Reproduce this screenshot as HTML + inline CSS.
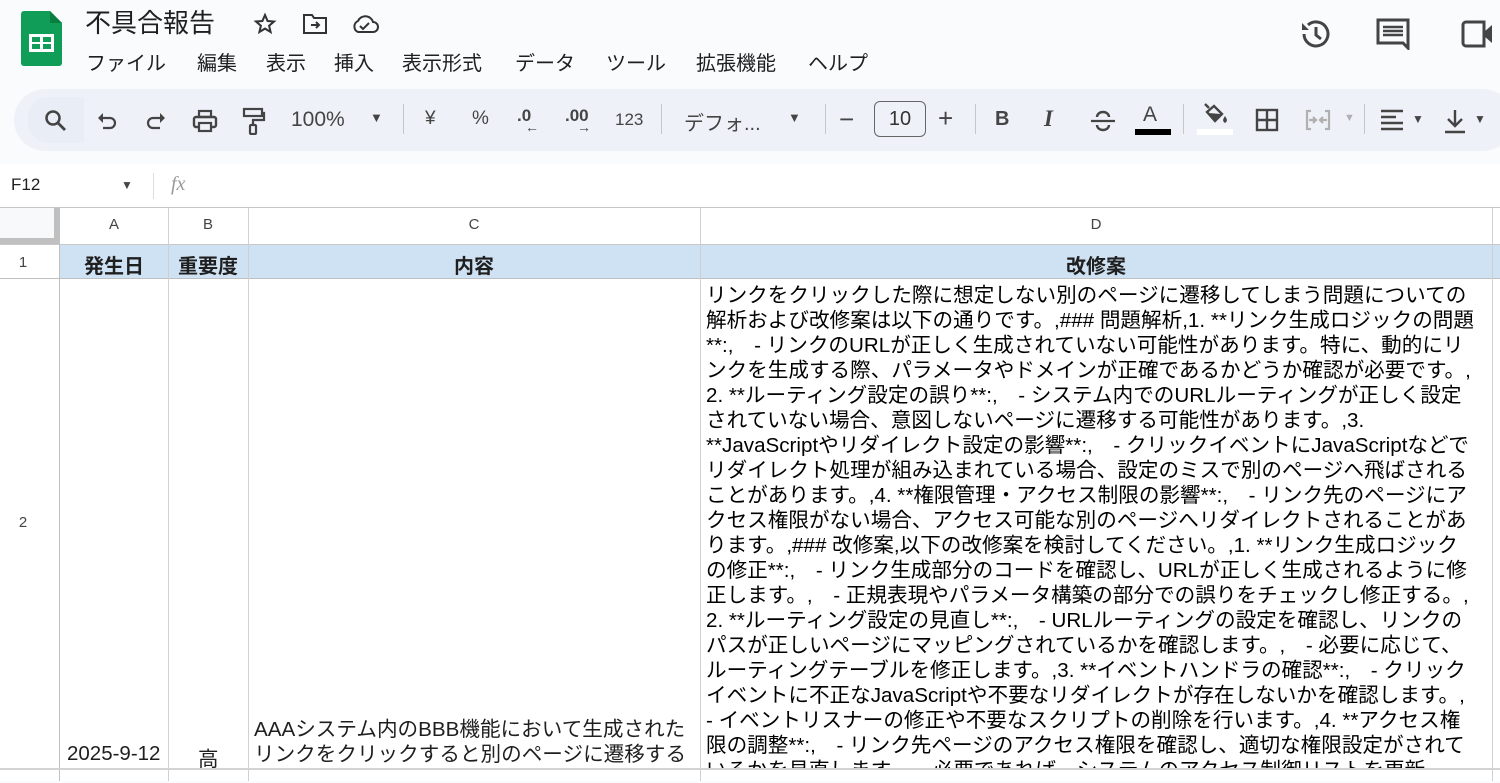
<!DOCTYPE html>
<html><head><meta charset="utf-8"><style>
*{margin:0;padding:0;box-sizing:border-box}
body{width:1500px;height:781px;overflow:hidden;background:#f9fbfd;font-family:"Liberation Sans","Noto Sans CJK JP",sans-serif;color:#1f1f1f;position:relative}
.abs{position:absolute}
.title{left:85px;top:3px;font-size:26px}
.menu{top:47px;font-size:20px;white-space:nowrap}
.tb{left:14px;top:89px;width:1500px;height:62px;border-radius:31px;background:#eef2f8}
.ic{position:absolute;color:#444;font-size:19px}
.sep{position:absolute;top:104px;width:1px;height:30px;background:#c7c7c7}
.fbar{left:0;top:164px;width:1500px;height:44px;background:#fff;border-bottom:1px solid #c7c7c7}
.grid{left:0;top:208px;width:1500px;height:573px;background:#fff}
.vl{position:absolute;width:1px;background:#e1e1e1}
.hl{position:absolute;height:1px;background:#e1e1e1}
.ch{position:absolute;top:216px;font-size:15px;color:#444;text-align:center}
.d{position:absolute;left:706px;top:283px;font-size:20.6px;line-height:25px;white-space:nowrap;color:#000}
</style></head><body>
<svg class="abs" style="left:21px;top:11px" width="41" height="55" viewBox="0 0 41 55"><path d="M3 0h26l12 12v40a3 3 0 0 1-3 3H3a3 3 0 0 1-3-3V3a3 3 0 0 1 3-3z" fill="#0f9d58"/><path d="M29 0l12 12H29z" fill="#087f3e"/><rect x="8" y="23" width="25" height="18" fill="#fff"/><rect x="11" y="26" width="8" height="5" fill="#0f9d58"/><rect x="22" y="26" width="8" height="5" fill="#0f9d58"/><rect x="11" y="33" width="8" height="5" fill="#0f9d58"/><rect x="22" y="33" width="8" height="5" fill="#0f9d58"/></svg>
<div class="abs title">不具合報告</div>
<svg class="abs" style="left:252px;top:12px" width="26" height="24" viewBox="0 0 24 24"><path d="M12 3l2.6 6 6.4.5-4.9 4.2 1.5 6.3L12 16.6 6.4 20l1.5-6.3L3 9.5 9.4 9z" fill="none" stroke="#333" stroke-width="2"/></svg>
<svg class="abs" style="left:302px;top:13px" width="26" height="22" viewBox="0 0 26 22"><path d="M2 2h8l2 3h12v15H2z" fill="none" stroke="#333" stroke-width="2"/><path d="M9 12h8m-3-3l3 3-3 3" fill="none" stroke="#333" stroke-width="2"/></svg>
<svg class="abs" style="left:350px;top:13px" width="30" height="22" viewBox="0 0 30 22"><path d="M8 19h15a5 5 0 0 0 0-10 8 8 0 0 0-15-1 6 6 0 0 0 0 11z" fill="none" stroke="#333" stroke-width="2"/><path d="M10 13l3 3 6-6" fill="none" stroke="#333" stroke-width="2"/></svg>
<div class="abs menu" style="left:86px">ファイル</div>
<div class="abs menu" style="left:197px">編集</div>
<div class="abs menu" style="left:266px">表示</div>
<div class="abs menu" style="left:334px">挿入</div>
<div class="abs menu" style="left:402px">表示形式</div>
<div class="abs menu" style="left:515px">データ</div>
<div class="abs menu" style="left:606px">ツール</div>
<div class="abs menu" style="left:696px">拡張機能</div>
<div class="abs menu" style="left:808px">ヘルプ</div>
<svg class="abs" style="left:1299px;top:17px" width="34" height="34" viewBox="0 0 34 34"><path d="M5 17A12 12 0 1 0 9 8" fill="none" stroke="#444" stroke-width="3"/><path d="M3 6v7h7z" fill="#444"/><path d="M17 10v8l5 4" fill="none" stroke="#444" stroke-width="3"/></svg>
<svg class="abs" style="left:1376px;top:18px" width="34" height="32" viewBox="0 0 34 32"><path d="M2 2h30v28l-5-5H2z" fill="none" stroke="#444" stroke-width="3"/><path d="M7 9h20M7 13h20M7 17h20" stroke="#444" stroke-width="2.5"/></svg>
<svg class="abs" style="left:1460px;top:20px" width="40" height="28" viewBox="0 0 40 28"><path d="M3 5a3 3 0 0 1 3-3h18v24H6a3 3 0 0 1-3-3z" fill="none" stroke="#444" stroke-width="3"/><path d="M24 12l8-7v18l-8-7z" fill="#444"/></svg>

<div class="abs tb"></div>
<div class="abs" style="left:28px;top:97px;width:56px;height:46px;border-radius:20px 0 0 20px;background:#e9eef6"></div>
<svg class="abs" style="left:44px;top:109px" width="24" height="24" viewBox="0 0 24 24"><circle cx="9" cy="9" r="6.5" fill="none" stroke="#444" stroke-width="2.5"/><path d="M14 14l7 7" stroke="#444" stroke-width="2.8"/></svg>
<svg class="abs" style="left:96px;top:110px" width="22" height="22" viewBox="0 0 22 22"><path d="M6 8h8a5 5 0 0 1 0 10H7" fill="none" stroke="#444" stroke-width="2.2"/><path d="M2 8l5-5v10z" fill="#444"/></svg>
<svg class="abs" style="left:145px;top:110px" width="22" height="22" viewBox="0 0 22 22"><path d="M16 8H8a5 5 0 0 0 0 10h7" fill="none" stroke="#444" stroke-width="2.2"/><path d="M20 8l-5-5v10z" fill="#444"/></svg>
<svg class="abs" style="left:192px;top:108px" width="26" height="26" viewBox="0 0 26 26"><rect x="7" y="3" width="12" height="6" fill="none" stroke="#444" stroke-width="2.2"/><rect x="2" y="9" width="22" height="10" rx="2" fill="none" stroke="#444" stroke-width="2.4"/><rect x="7" y="15" width="12" height="8" fill="#eef2f8" stroke="#444" stroke-width="2.2"/></svg>
<svg class="abs" style="left:242px;top:107px" width="24" height="28" viewBox="0 0 24 28"><rect x="2" y="2" width="18" height="7" fill="none" stroke="#444" stroke-width="2.2"/><path d="M20 6h2v7H11v5" fill="none" stroke="#444" stroke-width="2.2"/><rect x="8" y="18" width="6" height="9" rx="1" fill="none" stroke="#444" stroke-width="2.2"/></svg>
<div class="ic" style="left:291px;top:108px;font-size:21px">100%</div>
<div class="ic" style="left:370px;top:110px;font-size:13px">▼</div>
<div class="sep" style="left:403px"></div>
<div class="ic" style="left:425px;top:108px">¥</div>
<div class="ic" style="left:472px;top:108px">%</div>
<div class="ic" style="left:517px;top:106px;font-size:17px;font-weight:bold">.0<span style="position:absolute;left:8px;top:13px;font-size:14px">←</span></div>
<div class="ic" style="left:565px;top:106px;font-size:17px;font-weight:bold">.00<span style="position:absolute;left:12px;top:13px;font-size:14px">→</span></div>
<div class="ic" style="left:615px;top:110px;font-size:17px">123</div>
<div class="sep" style="left:661px"></div>
<div class="ic" style="left:684px;top:107px;font-size:20px">デフォ...</div>
<div class="ic" style="left:788px;top:110px;font-size:13px">▼</div>
<div class="sep" style="left:825px"></div>
<div class="ic" style="left:839px;top:104px;font-size:26px">−</div>
<div class="abs" style="left:874px;top:101px;width:52px;height:36px;border:1px solid #666;border-radius:6px;font-size:20px;text-align:center;line-height:34px;color:#333">10</div>
<div class="ic" style="left:938px;top:103px;font-size:26px">+</div>
<div class="sep" style="left:975px"></div>
<div class="ic" style="left:995px;top:108px;font-size:20px;font-weight:bold">B</div>
<div class="ic" style="left:1044px;top:106px;font-size:23px;font-style:italic;font-family:'Liberation Serif',serif;font-weight:bold">I</div>
<svg class="abs" style="left:1090px;top:110px" width="26" height="22" viewBox="0 0 26 22"><path d="M1 11h24" stroke="#444" stroke-width="2.2"/><path d="M7 7a6 5 0 0 1 12 0M7 15a6 5 0 0 0 12 0" fill="none" stroke="#444" stroke-width="2.4"/></svg>
<div class="ic" style="left:1143px;top:103px;font-size:21px">A</div>
<div class="abs" style="left:1135px;top:129px;width:36px;height:6px;background:#000"></div>
<div class="sep" style="left:1183px"></div>
<svg class="abs" style="left:1201px;top:103px" width="28" height="24" viewBox="0 0 28 24"><path d="M4 1l4 4M6 9l7-6 8 8-7 7z" fill="none" stroke="#444" stroke-width="2.4"/><path d="M7 10l13 1-6 7z" fill="#444"/><path d="M24 13c-2 3-3 5 0 7 3-2 2-4 0-7z" fill="#444"/></svg>
<div class="abs" style="left:1197px;top:129px;width:36px;height:6px;background:#fff"></div>
<svg class="abs" style="left:1255px;top:108px" width="24" height="24" viewBox="0 0 24 24"><rect x="2" y="2" width="20" height="20" fill="none" stroke="#444" stroke-width="2.4"/><path d="M12 2v20M2 12h20" stroke="#444" stroke-width="2.4"/></svg>
<svg class="abs" style="left:1305px;top:109px" width="26" height="22" viewBox="0 0 26 22"><path d="M6 2H2v18h4M20 2h4v18h-4M4 11h7m-3-3l3 3-3 3M22 11h-7m3-3l-3 3 3 3" fill="none" stroke="#b0b0b0" stroke-width="2.2"/></svg>
<div class="ic" style="left:1344px;top:112px;font-size:11px;color:#b0b0b0">▼</div>
<div class="sep" style="left:1364px"></div>
<svg class="abs" style="left:1380px;top:109px" width="24" height="24" viewBox="0 0 24 24"><path d="M1 2h22M1 8h15M1 14h22M1 20h22" stroke="#444" stroke-width="2.4"/></svg>
<div class="ic" style="left:1412px;top:112px;font-size:12px">▼</div>
<svg class="abs" style="left:1444px;top:108px" width="22" height="26" viewBox="0 0 22 26"><path d="M11 2v16M4 11l7 7 7-7M1 24h20" fill="none" stroke="#444" stroke-width="2.4"/></svg>
<div class="ic" style="left:1474px;top:112px;font-size:12px">▼</div>

<div class="abs fbar"></div>
<div class="abs" style="left:11px;top:175px;font-size:17px;color:#1f1f1f">F12</div>
<div class="ic" style="left:121px;top:178px;font-size:12px">▼</div>
<div class="abs" style="left:153px;top:173px;width:1px;height:26px;background:#ddd"></div>
<div class="abs" style="left:171px;top:173px;font-size:20px;color:#999;font-style:italic;font-family:'Liberation Serif',serif">fx</div>

<div class="abs grid"></div>
<div class="abs" style="left:0;top:208px;width:59px;height:37px;background:#f8f9fa"></div>
<div class="abs" style="left:54px;top:208px;width:6px;height:36px;background:#c0c0c0"></div>
<div class="abs" style="left:0;top:238px;width:60px;height:6px;background:#c0c0c0"></div>
<div class="abs" style="left:0;top:244px;width:59px;height:537px;background:#fff"></div>
<div class="abs" style="left:59px;top:208px;width:1px;height:573px;background:#c0c0c0"></div>
<div class="abs" style="left:60px;top:245px;width:1440px;height:33px;background:#cfe2f3"></div>
<div class="hl" style="left:0;top:244px;width:1500px;background:#c7c7c7"></div>
<div class="hl" style="left:0;top:278px;width:1500px;background:#c0c0c0"></div>
<div class="vl" style="left:168px;top:208px;height:573px;background:#d0d0d0"></div>
<div class="vl" style="left:248px;top:208px;height:573px;background:#d0d0d0"></div>
<div class="vl" style="left:700px;top:208px;height:573px;background:#d0d0d0"></div>
<div class="vl" style="left:1492px;top:208px;height:573px;background:#d0d0d0"></div>
<div class="ch" style="left:60px;width:108px">A</div>
<div class="ch" style="left:168px;width:80px">B</div>
<div class="ch" style="left:248px;width:452px">C</div>
<div class="ch" style="left:700px;width:792px">D</div>
<div class="ch" style="left:0;width:46px;top:254px">1</div>
<div class="ch" style="left:0;width:46px;top:514px">2</div>
<div class="abs" style="left:60px;width:108px;top:250px;text-align:center;font-size:20px;font-weight:bold">発生日</div>
<div class="abs" style="left:168px;width:80px;top:250px;text-align:center;font-size:20px;font-weight:bold">重要度</div>
<div class="abs" style="left:248px;width:452px;top:250px;text-align:center;font-size:20px;font-weight:bold">内容</div>
<div class="abs" style="left:700px;width:792px;top:250px;text-align:center;font-size:20px;font-weight:bold">改修案</div>
<div class="abs" style="left:67px;top:742px;font-size:20.5px">2025-9-12</div>
<div class="abs" style="left:198px;top:742px;font-size:20.5px">高</div>
<div class="abs" style="left:254px;top:717px;font-size:20.6px;line-height:25px;white-space:nowrap">AAAシステム内のBBB機能において生成された<br>リンクをクリックすると別のページに遷移する</div>
<div class="d">リンクをクリックした際に想定しない別のページに遷移してしまう問題についての<br>解析および改修案は以下の通りです。,### 問題解析,1. **リンク生成ロジックの問題<br>**:,　- リンクのURLが正しく生成されていない可能性があります。特に、動的にリ<br>ンクを生成する際、パラメータやドメインが正確であるかどうか確認が必要です。,<br>2. **ルーティング設定の誤り**:,　- システム内でのURLルーティングが正しく設定<br>されていない場合、意図しないページに遷移する可能性があります。,3.<br>**JavaScriptやリダイレクト設定の影響**:,　- クリックイベントにJavaScriptなどで<br>リダイレクト処理が組み込まれている場合、設定のミスで別のページへ飛ばされる<br>ことがあります。,4. **権限管理・アクセス制限の影響**:,　- リンク先のページにア<br>クセス権限がない場合、アクセス可能な別のページへリダイレクトされることがあ<br>ります。,### 改修案,以下の改修案を検討してください。,1. **リンク生成ロジック<br>の修正**:,　- リンク生成部分のコードを確認し、URLが正しく生成されるように修<br>正します。,　- 正規表現やパラメータ構築の部分での誤りをチェックし修正する。,<br>2. **ルーティング設定の見直し**:,　- URLルーティングの設定を確認し、リンクの<br>パスが正しいページにマッピングされているかを確認します。,　- 必要に応じて、<br>ルーティングテーブルを修正します。,3. **イベントハンドラの確認**:,　- クリック<br>イベントに不正なJavaScriptや不要なリダイレクトが存在しないかを確認します。,<br>- イベントリスナーの修正や不要なスクリプトの削除を行います。,4. **アクセス権<br>限の調整**:,　- リンク先ページのアクセス権限を確認し、適切な権限設定がされて<br>いるかを見直します。　- 必要であれば、システムのアクセス制御リストを更新</div>
<div class="abs" style="left:60px;top:768px;width:1440px;height:13px;background:#fff"></div>
<div class="abs" style="left:0;top:768px;width:1500px;height:2px;background:#d3d3d3"></div>
<div class="vl" style="left:168px;top:770px;height:11px;background:#d0d0d0"></div>
<div class="vl" style="left:248px;top:770px;height:11px;background:#d0d0d0"></div>
<div class="vl" style="left:700px;top:770px;height:11px;background:#d0d0d0"></div>
<div class="vl" style="left:1492px;top:770px;height:11px;background:#d0d0d0"></div>
</body></html>
